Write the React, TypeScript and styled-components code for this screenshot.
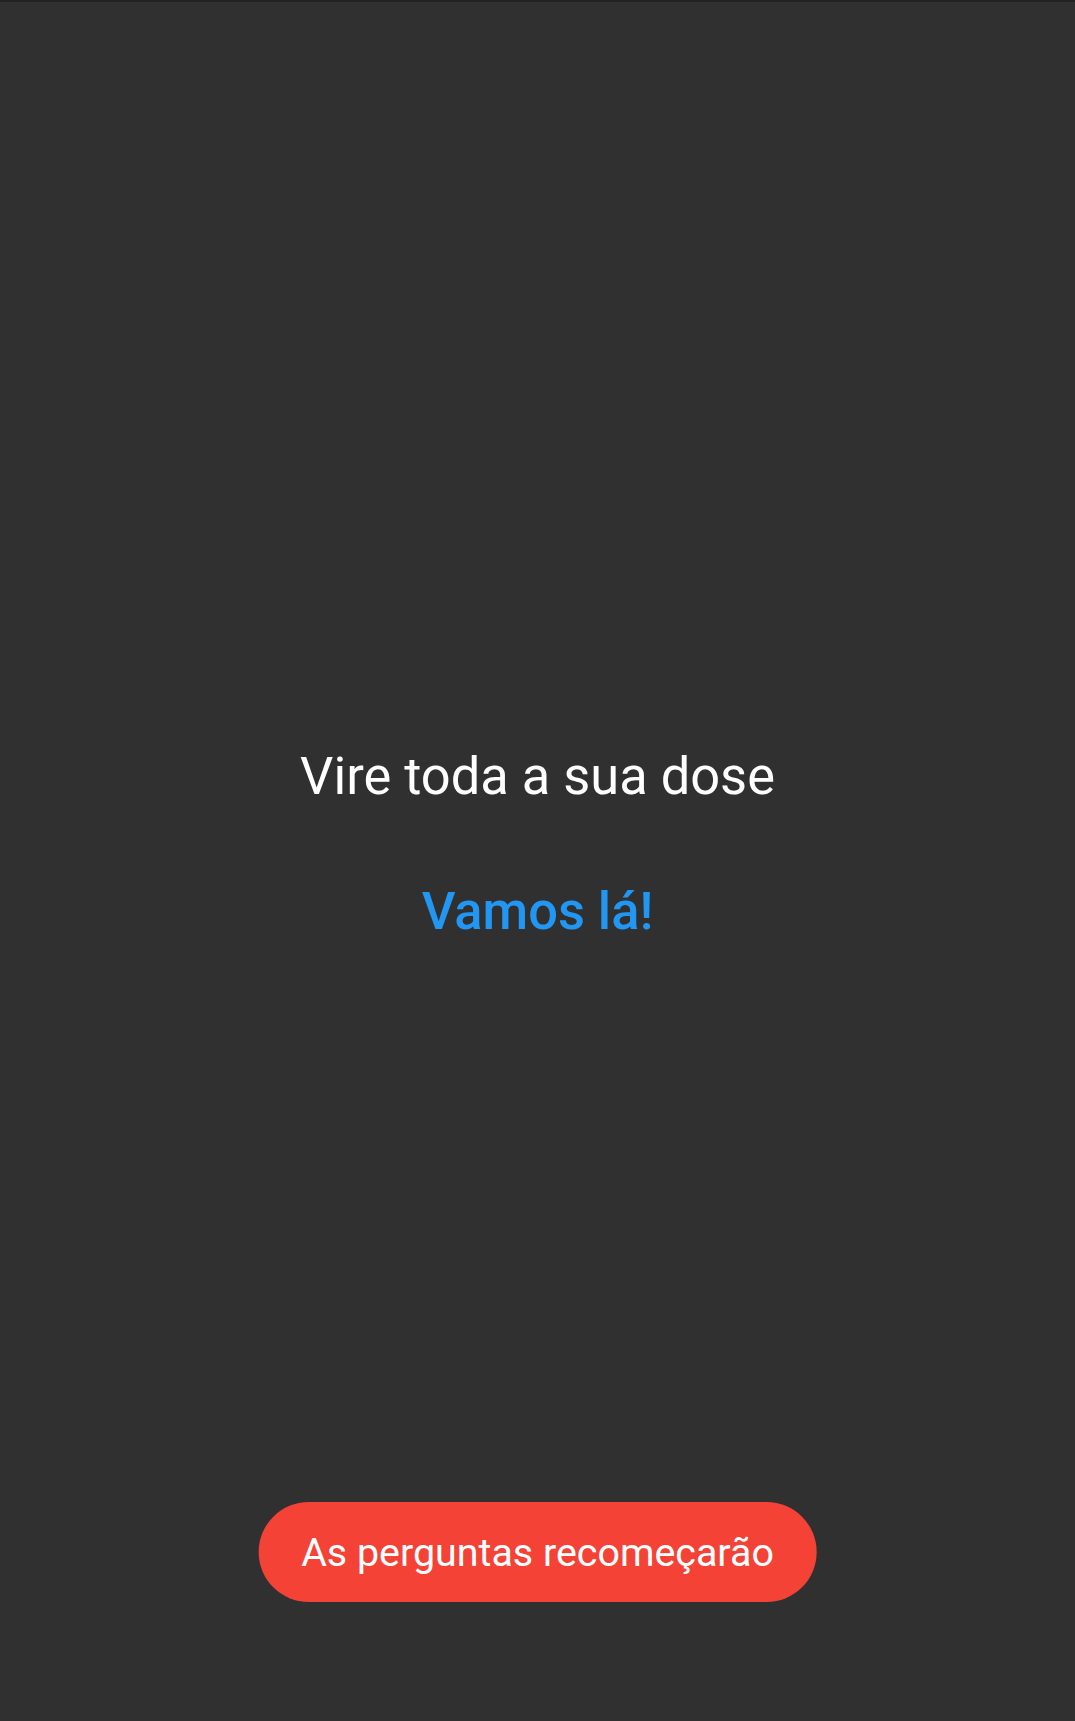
import React from "react";
import styled, { createGlobalStyle } from "styled-components";

const GlobalStyle = createGlobalStyle`
  html, body {
    margin: 0;
    padding: 0;
    background: #303030;
  }
  body {
    font-family: Roboto, "Liberation Sans", sans-serif;
  }
`;

const Screen = styled.div`
  position: relative;
  height: 1721px;
  display: flex;
  flex-direction: column;
  background: #303030;
  border-top: 2px solid #222222;
  box-sizing: border-box;
  overflow: hidden;
`;

const Content = styled.main`
  flex: 1;
  display: flex;
  flex-direction: column;
  align-items: center;
  justify-content: center;
  gap: 73px;
  padding-bottom: 36px;
`;

const Message = styled.h1<{ $accent?: boolean }>`
  margin: 0;
  font-size: 52.4px;
  line-height: 62px;
  font-weight: ${(p) => (p.$accent ? 500 : 400)};
  color: ${(p) => (p.$accent ? "#2196f3" : "#ffffff")};
  text-align: center;
`;

const Toast = styled.div`
  position: absolute;
  left: 50%;
  bottom: 119px;
  transform: translateX(-50%);
  height: 100px;
  padding: 0 43px;
  display: flex;
  align-items: center;
  justify-content: center;
  background: #f44336;
  border-radius: 50px;
  color: #ffffff;
  font-size: 39.4px;
  white-space: nowrap;
`;

export default function App() {
  return (
    <>
      <GlobalStyle />
      <Screen>
        <Content>
          <Message>Vire toda a sua dose</Message>
          <Message $accent>Vamos lá!</Message>
        </Content>
        <Toast>As perguntas recomeçarão</Toast>
      </Screen>
    </>
  );
}
